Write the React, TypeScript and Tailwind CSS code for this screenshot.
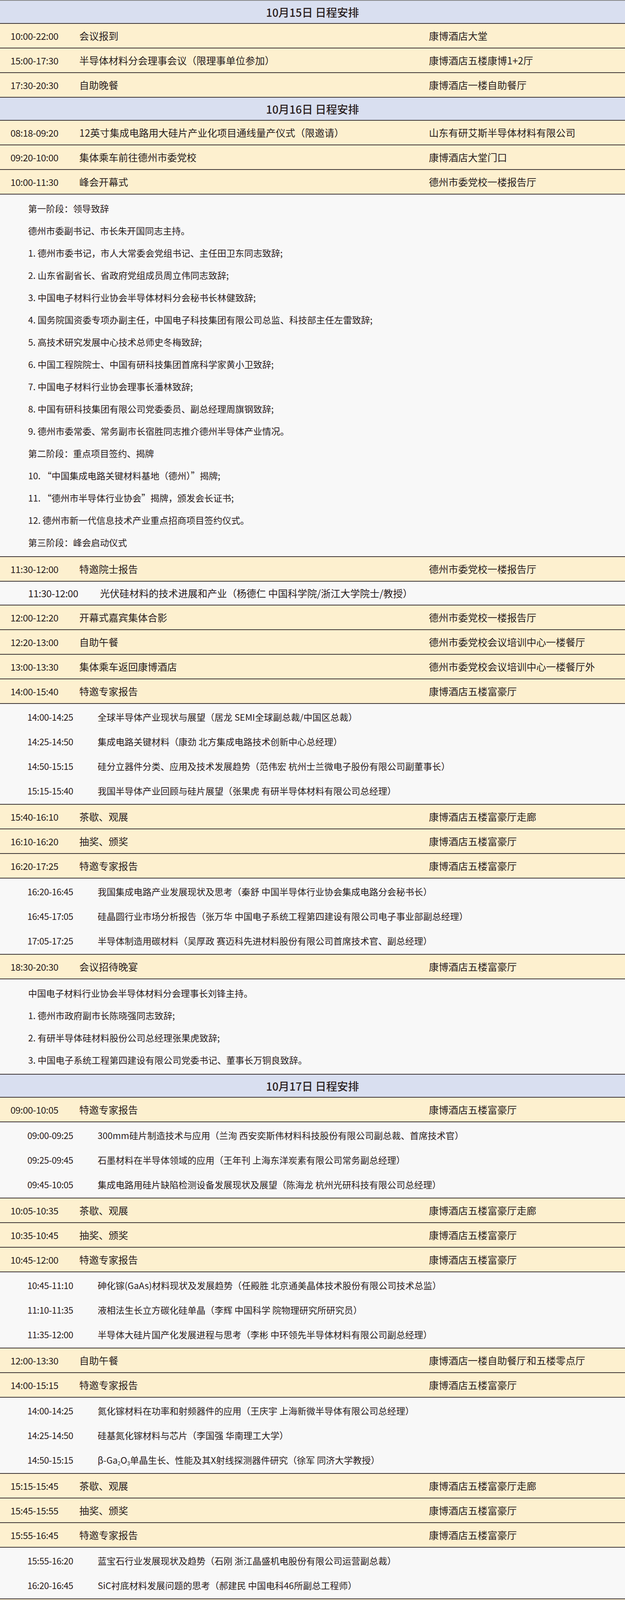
import React from "react";

type Item =
  | { k: "h"; t: string }
  | { k: "r"; time: string; title: React.ReactNode; loc?: string }
  | { k: "intro"; lines: string[] }
  | { k: "talks"; rows: [string, React.ReactNode][] }
  | { k: "g"; time: string; title: string };

const data: Item[] = [
  { k: "h", t: "10月15日 日程安排" },
  { k: "r", time: "10:00-22:00", title: "会议报到", loc: "康博酒店大堂" },
  { k: "r", time: "15:00-17:30", title: "半导体材料分会理事会议（限理事单位参加）", loc: "康博酒店五楼康博1+2厅" },
  { k: "r", time: "17:30-20:30", title: "自助晚餐", loc: "康博酒店一楼自助餐厅" },
  { k: "h", t: "10月16日 日程安排" },
  { k: "r", time: "08:18-09:20", title: "12英寸集成电路用大硅片产业化项目通线量产仪式（限邀请）", loc: "山东有研艾斯半导体材料有限公司" },
  { k: "r", time: "09:20-10:00", title: "集体乘车前往德州市委党校", loc: "康博酒店大堂门口" },
  { k: "r", time: "10:00-11:30", title: "峰会开幕式", loc: "德州市委党校一楼报告厅" },
  {
    k: "intro",
    lines: [
      "第一阶段：领导致辞",
      "德州市委副书记、市长朱开国同志主持。",
      "1. 德州市委书记，市人大常委会党组书记、主任田卫东同志致辞;",
      "2. 山东省副省长、省政府党组成员周立伟同志致辞;",
      "3. 中国电子材料行业协会半导体材料分会秘书长林健致辞;",
      "4. 国务院国资委专项办副主任，中国电子科技集团有限公司总监、科技部主任左雷致辞;",
      "5. 高技术研究发展中心技术总师史冬梅致辞;",
      "6. 中国工程院院士、中国有研科技集团首席科学家黄小卫致辞;",
      "7. 中国电子材料行业协会理事长潘林致辞;",
      "8. 中国有研科技集团有限公司党委委员、副总经理周旗钢致辞;",
      "9. 德州市委常委、常务副市长宿胜同志推介德州半导体产业情况。",
      "第二阶段：重点项目签约、揭牌",
      "10. “中国集成电路关键材料基地（德州）”揭牌;",
      "11. “德州市半导体行业协会”揭牌，颁发会长证书;",
      "12. 德州市新一代信息技术产业重点招商项目签约仪式。",
      "第三阶段：峰会启动仪式",
    ],
  },
  { k: "r", time: "11:30-12:00", title: "特邀院士报告", loc: "德州市委党校一楼报告厅" },
  { k: "g", time: "11:30-12:00", title: "光伏硅材料的技术进展和产业（杨德仁 中国科学院/浙江大学院士/教授）" },
  { k: "r", time: "12:00-12:20", title: "开幕式嘉宾集体合影", loc: "德州市委党校一楼报告厅" },
  { k: "r", time: "12:20-13:00", title: "自助午餐", loc: "德州市委党校会议培训中心一楼餐厅" },
  { k: "r", time: "13:00-13:30", title: "集体乘车返回康博酒店", loc: "德州市委党校会议培训中心一楼餐厅外" },
  { k: "r", time: "14:00-15:40", title: "特邀专家报告", loc: "康博酒店五楼富豪厅" },
  {
    k: "talks",
    rows: [
      ["14:00-14:25", "全球半导体产业现状与展望（居龙 SEMI全球副总裁/中国区总裁）"],
      ["14:25-14:50", "集成电路关键材料（康劲 北方集成电路技术创新中心总经理）"],
      ["14:50-15:15", "硅分立器件分类、应用及技术发展趋势（范伟宏 杭州士兰微电子股份有限公司副董事长）"],
      ["15:15-15:40", "我国半导体产业回顾与硅片展望（张果虎 有研半导体材料有限公司总经理）"],
    ],
  },
  { k: "r", time: "15:40-16:10", title: "茶歇、观展", loc: "康博酒店五楼富豪厅走廊" },
  { k: "r", time: "16:10-16:20", title: "抽奖、颁奖", loc: "康博酒店五楼富豪厅" },
  { k: "r", time: "16:20-17:25", title: "特邀专家报告", loc: "康博酒店五楼富豪厅" },
  {
    k: "talks",
    rows: [
      ["16:20-16:45", "我国集成电路产业发展现状及思考（秦舒 中国半导体行业协会集成电路分会秘书长）"],
      ["16:45-17:05", "硅晶圆行业市场分析报告（张万华 中国电子系统工程第四建设有限公司电子事业部副总经理）"],
      ["17:05-17:25", "半导体制造用碳材料（吴厚政 赛迈科先进材料股份有限公司首席技术官、副总经理）"],
    ],
  },
  { k: "r", time: "18:30-20:30", title: "会议招待晚宴", loc: "康博酒店五楼富豪厅" },
  {
    k: "intro",
    lines: [
      "中国电子材料行业协会半导体材料分会理事长刘锋主持。",
      "1. 德州市政府副市长陈晓强同志致辞;",
      "2. 有研半导体硅材料股份公司总经理张果虎致辞;",
      "3. 中国电子系统工程第四建设有限公司党委书记、董事长万铜良致辞。",
    ],
  },
  { k: "h", t: "10月17日 日程安排" },
  { k: "r", time: "09:00-10:05", title: "特邀专家报告", loc: "康博酒店五楼富豪厅" },
  {
    k: "talks",
    rows: [
      ["09:00-09:25", "300mm硅片制造技术与应用（兰洵 西安奕斯伟材料科技股份有限公司副总裁、首席技术官）"],
      ["09:25-09:45", "石墨材料在半导体领域的应用（王年刊 上海东洋炭素有限公司常务副总经理）"],
      ["09:45-10:05", "集成电路用硅片缺陷检测设备发展现状及展望（陈海龙 杭州光研科技有限公司总经理）"],
    ],
  },
  { k: "r", time: "10:05-10:35", title: "茶歇、观展", loc: "康博酒店五楼富豪厅走廊" },
  { k: "r", time: "10:35-10:45", title: "抽奖、颁奖", loc: "康博酒店五楼富豪厅" },
  { k: "r", time: "10:45-12:00", title: "特邀专家报告", loc: "康博酒店五楼富豪厅" },
  {
    k: "talks",
    rows: [
      ["10:45-11:10", "砷化镓(GaAs)材料现状及发展趋势（任殿胜 北京通美晶体技术股份有限公司技术总监）"],
      ["11:10-11:35", "液相法生长立方碳化硅单晶（李辉 中国科学 院物理研究所研究员）"],
      ["11:35-12:00", "半导体大硅片国产化发展进程与思考（李彬 中环领先半导体材料有限公司副总经理）"],
    ],
  },
  { k: "r", time: "12:00-13:30", title: "自助午餐", loc: "康博酒店一楼自助餐厅和五楼零点厅" },
  { k: "r", time: "14:00-15:15", title: "特邀专家报告", loc: "康博酒店五楼富豪厅" },
  {
    k: "talks",
    rows: [
      ["14:00-14:25", "氮化镓材料在功率和射频器件的应用（王庆宇 上海新微半导体有限公司总经理）"],
      ["14:25-14:50", "硅基氮化镓材料与芯片（李国强 华南理工大学）"],
      [
        "14:50-15:15",
        <>
          β-Ga<sub className="text-[13px]">2</sub>O<sub className="text-[13px]">3</sub>单晶生长、性能及其X射线探测器件研究（徐军 同济大学教授）
        </>,
      ],
    ],
  },
  { k: "r", time: "15:15-15:45", title: "茶歇、观展", loc: "康博酒店五楼富豪厅走廊" },
  { k: "r", time: "15:45-15:55", title: "抽奖、颁奖", loc: "康博酒店五楼富豪厅" },
  { k: "r", time: "15:55-16:45", title: "特邀专家报告", loc: "康博酒店五楼富豪厅" },
  {
    k: "talks",
    rows: [
      ["15:55-16:20", "蓝宝石行业发展现状及趋势（石刚 浙江晶盛机电股份有限公司运营副总裁）"],
      ["16:20-16:45", "SiC衬底材料发展问题的思考（郝建民 中国电科46所副总工程师）"],
    ],
  },
  { k: "r", time: "16:45-17:05", title: "峰会闭幕式", loc: "康博酒店五楼富豪厅" },
  {
    k: "intro",
    lines: [
      "中国电子材料行业协会半导体材料分会秘书长林健主持。",
      "1. 德州市委常委、天衢新区党工委书记祁小青同志致辞;",
      "2. 中国电子材料行业协会半导体材料分会理事长刘锋致闭幕词;",
      "3. 下一届承办单位徐州经济技术开发区、江苏鑫华半导体科技股份有限公司宣介。",
      "宣介人：徐州经济技术开发区党工委委员莫迎华。",
    ],
  },
  { k: "r", time: "17:00-20:30", title: "自助晚餐", loc: "康博酒店一楼自助餐厅和五楼零点厅" },
  { k: "h", t: "10月18日 日程安排" },
];

const font = { fontFamily: '"Noto Sans CJK SC", "Noto Sans", sans-serif' };

function Row({ time, title, loc }: { time: string; title: React.ReactNode; loc?: string }) {
  return (
    <div className="flex items-center bg-[#fdf0cf] border-b-2 border-[#3b3434] h-[63px]">
      <div className="w-[140px] ml-[18px] text-center text-[24px] tracking-[-0.5px]">{time}</div>
      <div className="ml-[45px] w-[895px] text-[25px]">{title}</div>
      <div className="text-[25px]">{loc}</div>
    </div>
  );
}

export default function App() {
  return (
    <div style={font} className="w-[1600px] border-t-2 border-[#888] text-[#2a2020] bg-[#f8f8f8] pb-[30px]">
      {data.map((it, i) => {
        if (it.k === "h")
          return (
            <div key={i} className="h-[59px] bg-[#d9dff0] border-b-2 border-[#3b3434] flex items-center justify-center text-[28px] font-medium">
              {it.t}
            </div>
          );
        if (it.k === "r") return <Row key={i} time={it.time} title={it.title} loc={it.loc} />;
        if (it.k === "g")
          return (
            <div key={i} className="h-[61px] flex items-center bg-[#f8f8f8] border-b-2 border-[#3b3434] text-[25px]">
              <div className="ml-[72px] w-[184px] tracking-[-0.5px]">{it.time}</div>
              <div>{it.title}</div>
            </div>
          );
        if (it.k === "intro")
          return (
            <div key={i} className="bg-[#f8f8f8] border-b-2 border-[#3b3434] py-[7px] pl-[72px]">
              {it.lines.map((l, j) => (
                <div key={j} className="leading-[57px] h-[57px] text-[23px]">{l}</div>
              ))}
            </div>
          );
        return (
          <div key={i} className="bg-[#f8f8f8] border-b-2 border-[#3b3434] py-[2px]">
            {it.rows.map(([t, title], j) => (
              <div key={j} className="h-[63px] flex items-center text-[23px]">
                <div className="ml-[70px] w-[180px] tracking-[-0.5px]">{t}</div>
                <div>{title}</div>
              </div>
            ))}
          </div>
        );
      })}
      <div className="flex items-center bg-[#fdf0cf] border-b-2 border-[#3b3434] h-[126px]">
        <div className="w-[140px] ml-[18px] text-center text-[24px] tracking-[-0.5px]">09:00-11:20</div>
        <div className="ml-[45px] w-[895px] text-[25px] leading-[62px]">
          <div>企业参观：集成电路关键材料基地展厅、山东有研半导体材料有限公司</div>
          <div>手机智能产业园</div>
        </div>
        <div className="text-[25px]">康博酒店酒店大堂门口</div>
      </div>
      <Row time="12:00-13:30" title="自助午餐" loc="康博酒店一楼自助餐厅" />
      <Row time="14:00" title="会议疏散" />
    </div>
  );
}
